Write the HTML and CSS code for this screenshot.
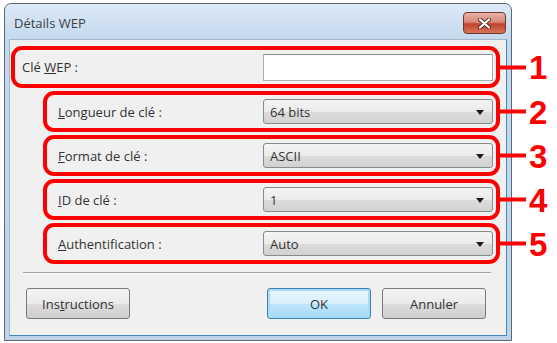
FILE: index.html
```html
<!DOCTYPE html>
<html lang="fr">
<head>
  <meta charset="UTF-8" />
  <title>Détails WEP</title>
  <link rel="stylesheet" href="styles.css">
</head>
<body>
  <div class="window">
    <div class="titlebar">
      <span class="title">Détails WEP</span>
      <button class="close" aria-label="Fermer">
        <svg width="13" height="11" viewBox="0 0 13 11">
          <path d="M2 1.5 L11 9.5 M11 1.5 L2 9.5" stroke="#5a2a22" stroke-width="4" stroke-linecap="round"/>
          <path d="M2 1.5 L11 9.5 M11 1.5 L2 9.5" stroke="#ffffff" stroke-width="2.2" stroke-linecap="round"/>
        </svg>
      </button>
    </div>

    <div class="client">
      <div class="row first">
        <label class="lbl">Clé <u>W</u>EP :</label>
        <input class="field" type="text">
        <span class="callout"><i></i>1</span>
      </div>

      <div class="row">
        <label class="lbl"><u>L</u>ongueur de clé :</label>
        <div class="combo">64 bits<b></b></div>
        <span class="callout"><i></i>2</span>
      </div>

      <div class="row">
        <label class="lbl"><u>F</u>ormat de clé :</label>
        <div class="combo">ASCII<b></b></div>
        <span class="callout"><i></i>3</span>
      </div>

      <div class="row">
        <label class="lbl"><u>I</u>D de clé :</label>
        <div class="combo">1<b></b></div>
        <span class="callout"><i></i>4</span>
      </div>

      <div class="row">
        <label class="lbl"><u>A</u>uthentification :</label>
        <div class="combo">Auto<b></b></div>
        <span class="callout"><i></i>5</span>
      </div>

      <div class="sep"></div>

      <div class="buttons">
        <button class="btn">Ins<u>t</u>ructions</button>
        <button class="btn default">OK</button>
        <button class="btn">Annuler</button>
      </div>
    </div>
  </div>
</body>
</html>
```

FILE: styles.css
```css
* {
  margin: 0;
  padding: 0;
  box-sizing: border-box;
}

body {
  background: #ffffff;
  font-family: 'Open Sans', 'Noto Sans', sans-serif;
  font-size: 13px;
  color: #2a2a2a;
}

.window {
  position: relative;
  width: 508px;
  height: 338px;
  margin: 3px 0 0 4px;
  padding: 0 4px 4px;
  display: flex;
  flex-direction: column;
  border: 1px solid #5d6874;
  border-radius: 7px 7px 0 0;
  background: linear-gradient(#dce9f7, #c4d8ee 36px, #bfd4ec);
}

.titlebar {
  height: 35px;
  display: flex;
  justify-content: space-between;
  align-items: flex-start;
}

.title {
  margin: 10px 0 0 5px;
  color: #3b3f45;
}

.close {
  width: 43px;
  height: 22px;
  margin: 8px 1px 0 0;
  display: flex;
  align-items: center;
  justify-content: center;
  border: 1px solid #6e3a30;
  border-radius: 4px;
  background: linear-gradient(#e8b3a6, #d88a76 45%, #c2452e 55%, #d8735a);
}

.client {
  flex: 1;
  position: relative;
  padding: 6px 6px 0 1px;
  background: #f0f0f0;
  border: 1px solid;
  border-color: #a3b6ca #3f8bb7 #3f8bb7 #a3b6ca;
}

.row {
  position: relative;
  height: 41px;
  margin: 3px 0 0 32px;
  padding: 0 3px 0 11px;
  display: flex;
  align-items: center;
  border: 4px solid #ff0000;
  border-radius: 11px;
}

.row.first {
  height: 42px;
  margin: 0;
  padding-left: 7px;
}

.lbl {
  flex: 1;
  color: #333;
}

.field {
  width: 230px;
  height: 27px;
  border: 1px solid #abadb3;
  border-top-color: #8e9094;
  background: #ffffff;
}

.combo {
  position: relative;
  width: 230px;
  height: 25px;
  padding: 3px 0 0 6px;
  border: 1px solid #8a8a8a;
  border-radius: 3px;
  background: linear-gradient(#f4f4f4, #ebebeb 50%, #dcdcdc 51%, #d2d2d2);
  color: #333;
}

.combo b {
  position: absolute;
  right: 8px;
  top: 10px;
  border-left: 4px solid transparent;
  border-right: 4px solid transparent;
  border-top: 5px solid #1a1a1a;
}

.callout {
  position: absolute;
  left: calc(100% + 4px);
  top: 50%;
  transform: translateY(-50%);
  display: flex;
  align-items: center;
  font-family: 'Liberation Sans', Arial, sans-serif;
  font-weight: bold;
  font-size: 33px;
  line-height: 1;
  color: #ff0000;
}

.callout i {
  width: 26px;
  height: 4px;
  margin-right: 3px;
  background: #ff0000;
}

.sep {
  width: 468px;
  margin: 8px 0 0 12px;
  border-top: 1px solid #a0a0a0;
  border-bottom: 1px solid #ffffff;
}

.buttons {
  display: flex;
  margin: 14px 0 0 15px;
}

.btn {
  width: 104px;
  height: 31px;
  font-family: inherit;
  font-size: 13px;
  color: #333;
  border: 1px solid #7a7a7a;
  border-radius: 3px;
  background: linear-gradient(#f3f3f3, #ebebeb 50%, #dddddd 51%, #cfcfcf);
}

.btn.default {
  margin-left: auto;
  border-color: #3c7fb1;
  box-shadow: inset 0 0 0 2px #a9dbf5;
  background: linear-gradient(#eaf6fd, #d9f0fc 50%, #bee6fd 51%, #a7d9f5);
}

.btn + .btn.default + .btn {
  margin: 0 14px 0 11px;
}
```
